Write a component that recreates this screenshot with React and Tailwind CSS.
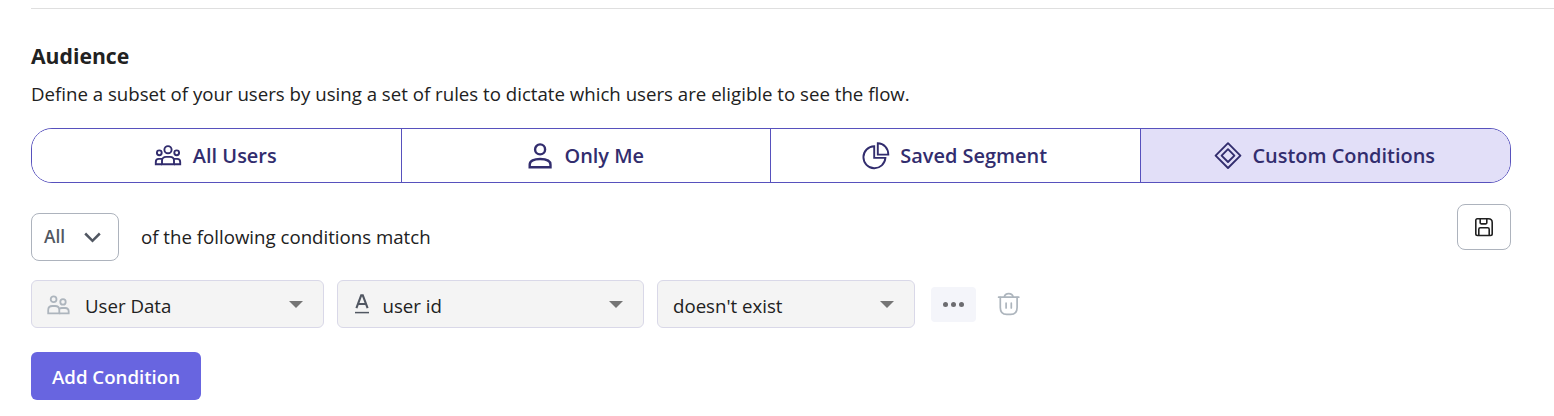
const UsersIcon = () => (
  <svg width="28" height="28" viewBox="0 0 28 28" fill="none" stroke="currentColor" strokeWidth="1.9" className="mr-px -ml-px shrink-0">
    <circle cx="14" cy="7.7" r="3.6" />
    <circle cx="5.3" cy="10.8" r="2.4" />
    <circle cx="22.7" cy="10.8" r="2.4" />
    <path d="M8 22.2v-3.6c0-2.4 1.7-3.7 4-3.7h4c2.3 0 4 1.3 4 3.7v3.6z" />
    <path d="M8 22.2H1.8v-2.3c0-1.8 1.2-3 3-3h3.6M20 22.2h6.2v-2.3c0-1.8-1.2-3-3-3h-3.6" />
  </svg>
);

const UserIcon = () => (
  <svg width="28" height="28" viewBox="0 0 28 28" fill="none" stroke="currentColor" strokeWidth="2.4" className="shrink-0">
    <circle cx="14.1" cy="7.4" r="5" />
    <path d="M3.7 25.3v-2.6c0-3.8 4.4-5.7 10.4-5.7s10.4 1.9 10.4 5.7v2.6z" />
  </svg>
);

const PieIcon = () => (
  <svg width="28" height="28" viewBox="0 0 28 28" fill="none" stroke="currentColor" strokeWidth="1.9" className="shrink-0">
    <path d="M12.2 4.2a11 11 0 1 0 11.2 11.7H12.2z" />
    <path d="M15.8 1.3v11.3h10.5C26.3 6.4 21.9 1.3 15.8 1.3z" />
  </svg>
);

const DiamondIcon = () => (
  <svg width="28" height="28" viewBox="0 0 28 28" fill="none" stroke="currentColor" strokeWidth="1.9" strokeLinejoin="round" className="shrink-0">
    <path d="M14 1.2 26.4 13.6 14 26 1.6 13.6z" />
    <path d="M14 7.2 20.4 13.6 14 20 7.6 13.6z" />
  </svg>
);

const SaveIcon = () => (
  <svg width="20" height="20" viewBox="0 0 20 20" fill="none" stroke="currentColor" strokeWidth="1.6" strokeLinejoin="round">
    <path d="M3.2 1.8h11.2q3.8 0 3.8 3.8v11.2a1.7 1.7 0 0 1-1.7 1.7H3.5a1.7 1.7 0 0 1-1.7-1.7V3.2a1.4 1.4 0 0 1 1.4-1.4z" />
    <path d="M6.2 2v3.7a1.2 1.2 0 0 0 1.2 1.2h4.2a1.2 1.2 0 0 0 1.2-1.2V2M4.8 18.3v-6a1.5 1.5 0 0 1 1.5-1.5h7.4a1.5 1.5 0 0 1 1.5 1.5v6" />
  </svg>
);

const PeopleIcon = () => (
  <svg width="24" height="20" viewBox="0 0 24 20" fill="none" stroke="currentColor" strokeWidth="1.8" className="shrink-0">
    <circle cx="6.6" cy="4.3" r="2.9" />
    <circle cx="16" cy="6.9" r="2.7" />
    <path d="M1.2 18.4v-3.2c0-2.5 1.8-4.2 4.2-4.2h2.7c2.4 0 4.2 1.7 4.2 4.2v3.2z" />
    <path d="M12.3 18.4h9.4v-1.8c0-2.1-1.5-3.6-3.5-3.6h-3.4c-1 0-1.8.3-2.5.9" />
  </svg>
);

const TextIcon = () => (
  <svg width="16" height="20" viewBox="0 0 16 20" fill="none" stroke="currentColor" className="shrink-0">
    <path d="M2.4 14.2 7.2 1.4h1.6l4.8 12.8M4.2 10h7.6" strokeWidth="2.1" />
    <path d="M1 18.6h14" strokeWidth="1.5" />
  </svg>
);

const TrashIcon = () => (
  <svg width="24" height="24" viewBox="0 0 24 24" fill="none" stroke="currentColor" strokeWidth="1.7" strokeLinecap="round">
    <path d="M1.6 5.2h20.2M7.2 5c.5-2 2.2-3.3 4.5-3.3s4 1.3 4.5 3.3" />
    <path d="M3.3 5.4v10c0 4.6 2.4 7 6.4 7h4c4 0 6.4-2.4 6.4-7v-10" />
    <path d="M9.1 11.2v4.8M14.3 11.2v4.8" />
  </svg>
);

const Caret = () => (
  <svg width="14" height="7" viewBox="0 0 14 7" className="ml-auto shrink-0">
    <path d="M0 0h14L7 7z" fill="#757575" />
  </svg>
);

const tabs = [
  { name: "All Users", icon: <UsersIcon /> },
  { name: "Only Me", icon: <UserIcon /> },
  { name: "Saved Segment", icon: <PieIcon /> },
  { name: "Custom Conditions", icon: <DiamondIcon />, active: true },
];

function App() {
  return (
    <div className="h-[416px] w-full overflow-hidden bg-white pl-[31px] pt-2 font-['Open_Sans',sans-serif] text-[18.66px] text-[#212121]">
      <div className="h-px bg-[#dfdfdf]" />

      <div className="w-[1480px]">
        <h2 className="mt-8 text-[21.2px] leading-[30px] font-bold">Audience</h2>
        <p className="mt-2 leading-[30px] whitespace-nowrap">
          Define a subset of your users by using a set of rules to dictate which users are eligible to see the flow.
        </p>

        {/* Audience type */}
        <div className="mt-[19px] grid h-[55px] grid-cols-4 divide-x divide-[#5751bd] overflow-hidden rounded-[21px] border border-[#5751bd] text-[#322d6e]">
          {tabs.map((tab) => (
            <button
              key={tab.name}
              className={`flex items-center justify-center gap-2.5 pr-px text-[19.95px] font-semibold whitespace-nowrap ${
                tab.active ? "bg-[#e2dff8]" : "bg-white"
              }`}
            >
              {tab.icon}
              {tab.name}
            </button>
          ))}
        </div>

        <div className="mt-[21px] flex h-[57px] items-start">
          <button className="mt-[9px] flex h-12 w-[88px] items-center justify-between rounded-lg border border-[#adb3bd] pr-[17px] pl-3 font-semibold text-[#515762]">
            <span className="text-[17.3px]">All</span>
            <svg width="17" height="11" viewBox="0 0 17 11" fill="none" stroke="currentColor" strokeWidth="2.5">
              <path d="m1.2 1.5 7.3 7.3 7.3-7.3" />
            </svg>
          </button>
          <span className="mt-[18px] ml-[22px] leading-[30px]">of the following conditions match</span>
          <button className="ml-auto flex h-[46px] w-[54px] items-center justify-center rounded-lg border border-[#adb3bd]">
            <SaveIcon />
          </button>
        </div>

        {/* Condition row */}
        <div className="mt-[19px] flex h-12 items-center">
          <div className="flex h-12 w-[293px] items-center rounded-md border border-[#d9d8e8] bg-[#f4f4f4] pr-5 pl-[15px]">
            <span className="mt-0.5 text-[#adb5bd]"><PeopleIcon /></span>
            <span className="mt-1 ml-3.5">User Data</span>
            <Caret />
          </div>
          <div className="ml-[13px] flex h-12 w-[307px] items-center rounded-md border border-[#d9d8e8] bg-[#f4f4f4] pr-5 pl-4">
            <span className="text-[#515762]"><TextIcon /></span>
            <span className="mt-1 ml-[12.5px]">user id</span>
            <Caret />
          </div>
          <div className="ml-[13px] flex h-12 w-[258px] items-center rounded-md border border-[#d9d8e8] bg-[#f4f4f4] pr-5 pl-[15px]">
            <span className="mt-1">doesn't exist</span>
            <Caret />
          </div>
          <button className="ml-4 flex h-[35px] w-[45px] items-center justify-center gap-[3px] rounded-sm bg-[#f4f5fa]">
            <span className="size-[5px] rounded-full bg-[#6c6c70]" />
            <span className="size-[5px] rounded-full bg-[#6c6c70]" />
            <span className="size-[5px] rounded-full bg-[#6c6c70]" />
          </button>
          <button className="ml-[21px] text-[#adb5bd]"><TrashIcon /></button>
        </div>

        <button className="mt-6 flex h-12 w-[170px] items-center justify-center rounded-md bg-[#6865e0] pt-0.5 font-semibold whitespace-nowrap text-white">
          Add Condition
        </button>
      </div>
    </div>
  );
}

export default App;
